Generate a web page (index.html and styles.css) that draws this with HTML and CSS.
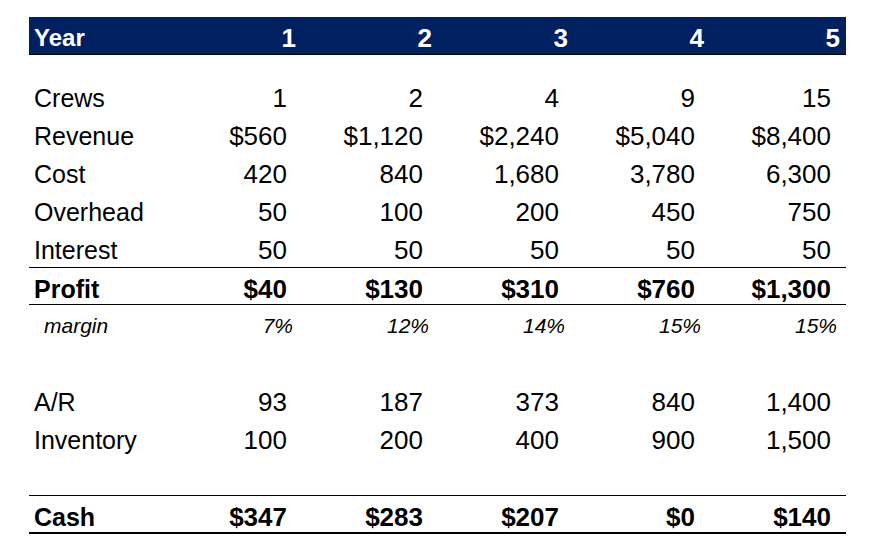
FILE: index.html
```html
<!DOCTYPE html>
<html>
<head>
<meta charset="utf-8">
<link rel="stylesheet" href="styles.css">
</head>
<body>
<div class="sheet">
  <div class="row head">
    <div class="lbl">Year</div>
    <div class="num">1</div><div class="num">2</div><div class="num">3</div><div class="num">4</div><div class="num">5</div>
  </div>
  <div class="row gap-sm"></div>
  <div class="row">
    <div class="lbl">Crews</div>
    <div class="num">1</div><div class="num">2</div><div class="num">4</div><div class="num">9</div><div class="num">15</div>
  </div>
  <div class="row">
    <div class="lbl">Revenue</div>
    <div class="num">$560</div><div class="num">$1,120</div><div class="num">$2,240</div><div class="num">$5,040</div><div class="num">$8,400</div>
  </div>
  <div class="row">
    <div class="lbl">Cost</div>
    <div class="num">420</div><div class="num">840</div><div class="num">1,680</div><div class="num">3,780</div><div class="num">6,300</div>
  </div>
  <div class="row">
    <div class="lbl">Overhead</div>
    <div class="num">50</div><div class="num">100</div><div class="num">200</div><div class="num">450</div><div class="num">750</div>
  </div>
  <div class="row">
    <div class="lbl">Interest</div>
    <div class="num">50</div><div class="num">50</div><div class="num">50</div><div class="num">50</div><div class="num">50</div>
  </div>
  <div class="row total profit">
    <div class="lbl">Profit</div>
    <div class="num">$40</div><div class="num">$130</div><div class="num">$310</div><div class="num">$760</div><div class="num">$1,300</div>
  </div>
  <div class="row pct">
    <div class="lbl">margin</div>
    <div class="num">7%</div><div class="num">12%</div><div class="num">14%</div><div class="num">15%</div><div class="num">15%</div>
  </div>
  <div class="row"></div>
  <div class="row">
    <div class="lbl">A/R</div>
    <div class="num">93</div><div class="num">187</div><div class="num">373</div><div class="num">840</div><div class="num">1,400</div>
  </div>
  <div class="row">
    <div class="lbl">Inventory</div>
    <div class="num">100</div><div class="num">200</div><div class="num">400</div><div class="num">900</div><div class="num">1,500</div>
  </div>
  <div class="row"></div>
  <div class="row total cash">
    <div class="lbl">Cash</div>
    <div class="num">$347</div><div class="num">$283</div><div class="num">$207</div><div class="num">$0</div><div class="num">$140</div>
  </div>
</div>
</body>
</html>
```

FILE: styles.css
```css
html, body {
  margin: 0;
  padding: 0;
  background: #ffffff;
}

body {
  padding: 17px 0 0 29px;
  font-family: "Liberation Sans", Arial, sans-serif;
  color: #000000;
}

.sheet {
  width: 817px;
  display: flex;
  flex-direction: column;
}

.row {
  display: grid;
  grid-template-columns: 137px repeat(5, 136px);
  height: 38px;
  box-sizing: border-box;
  padding-top: 5px;
  line-height: 32px;
  white-space: nowrap;
}

.lbl {
  padding-left: 5px;
  font-size: 25px;
}

.num {
  text-align: right;
  padding-right: 15px;
  font-size: 26px;
}

.head {
  background: #002060;
  color: #ffffff;
  font-weight: bold;
  border-bottom: 1px solid #000000;
}

.head .lbl {
  font-size: 24px;
}

.head .num {
  padding-right: 6px;
}

.gap-sm {
  height: 22px;
  padding: 0;
}

.total {
  font-weight: bold;
}

.total .lbl {
  font-size: 25px;
}

.profit {
  border-top: 1px solid #000000;
  border-bottom: 1px solid #000000;
}

.cash {
  height: 39px;
  border-top: 1px solid #000000;
  border-bottom: 2px solid #000000;
}

.pct {
  font-style: italic;
}

.pct .lbl {
  padding-left: 15px;
  font-size: 21px;
}

.pct .num {
  padding-right: 9px;
  font-size: 21px;
}
```
